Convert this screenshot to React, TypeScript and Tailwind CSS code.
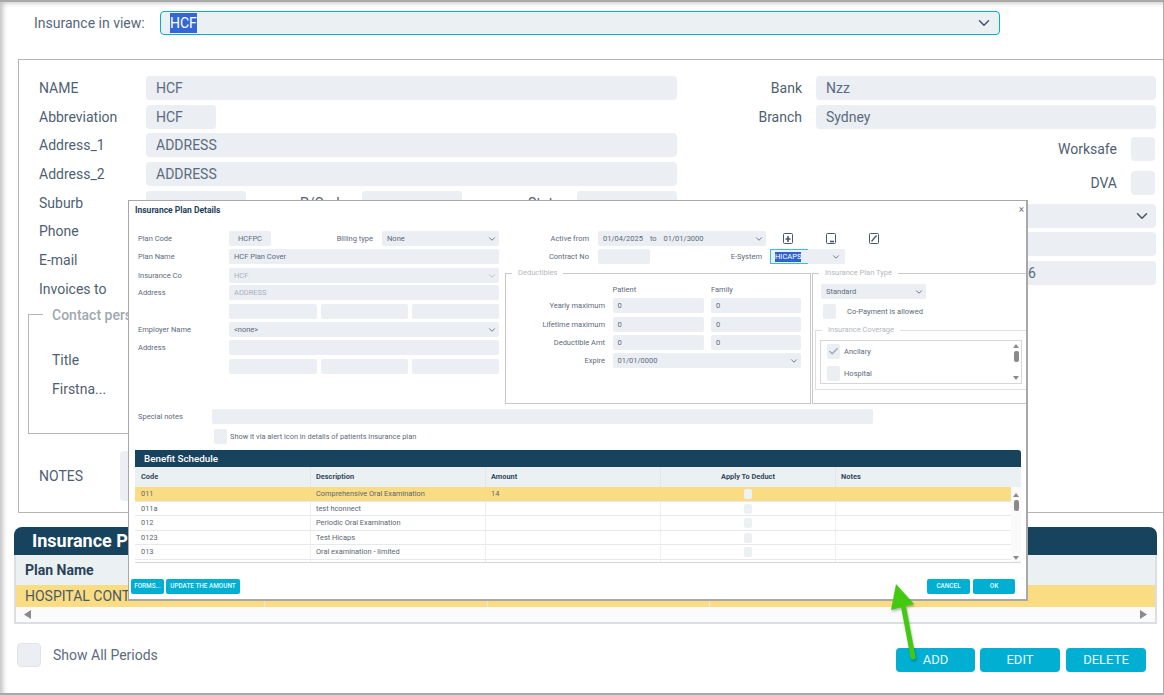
import { ChevronDown, Check } from 'lucide-react';

const font = { fontFamily: 'Roboto, "Liberation Sans", sans-serif' };

function Field({ value = '', className = '' }: { value?: string; className?: string }) {
    return (
        <div className={`h-[24px] rounded-[4px] bg-[#ebeef3] px-[10px] text-[14px] leading-[24px] text-[#5c6b80] ${className}`}>
            {value}
        </div>
    );
}

function Label({ children, className = '' }: { children: string; className?: string }) {
    return <div className={`text-[14px] leading-[24px] text-[#4f5f72] ${className}`}>{children}</div>;
}

function Mini({ value = '', className = '', muted = false }: { value?: string; className?: string; muted?: boolean }) {
    return (
        <div className={`h-[15px] shrink-0 rounded-[2px] bg-[#ebeef3] px-[5px] text-[7.5px] leading-[15px] ${muted ? 'text-[#a9b0ba]' : 'text-[#5c6b7c]'} ${className}`}>
            {value}
        </div>
    );
}

function MiniSelect({ value, className = '', muted = false }: { value: string; className?: string; muted?: boolean }) {
    return (
        <div className={`flex h-[15px] shrink-0 items-center justify-between rounded-[2px] bg-[#ebeef3] pl-[5px] pr-[2px] text-[7.5px] ${muted ? 'text-[#a9b0ba]' : 'text-[#5c6b7c]'} ${className}`}>
            <span>{value}</span>
            <ChevronDown size={10} className={muted ? 'text-[#b5bac2]' : 'text-[#55657a]'} />
        </div>
    );
}

function MiniLabel({ children, className = '' }: { children: string; className?: string }) {
    return <div className={`h-[15px] shrink-0 whitespace-nowrap text-[7.5px] leading-[15px] text-[#5c6b7c] ${className}`}>{children}</div>;
}

function MiniBox({ className = '', checked = false }: { className?: string; checked?: boolean }) {
    return (
        <div className={`flex h-[15px] w-[13px] shrink-0 items-center justify-center rounded-[2px] bg-[#ebeef3] ${className}`}>
            {checked && <Check size={11} strokeWidth={3.5} className="text-[#a3adbb]" />}
        </div>
    );
}

function Scrollbar({ className = '' }: { className?: string }) {
    return (
        <div className={`flex w-[10px] shrink-0 flex-col items-center justify-between py-[3px] ${className}`}>
            <div className="flex flex-col items-center gap-[3px]">
                <svg width="6" height="4" viewBox="0 0 6 4"><polygon points="3,0 6,4 0,4" fill="#8a8a8a" /></svg>
                <div className="h-[11px] w-[5px] rounded-[2px] bg-[#8a8a8a]" />
            </div>
            <svg width="6" height="4" viewBox="0 0 6 4"><polygon points="0,0 6,0 3,4" fill="#8a8a8a" /></svg>
        </div>
    );
}

function ToolIcon({ kind }: { kind: 'plus' | 'minus' | 'edit' }) {
    return (
        <svg width="10" height="11" viewBox="0 0 10 11" fill="none" stroke="#46586c">
            <rect x="0.5" y="0.5" width="9" height="10" rx="1" />
            {kind === 'plus' && <path d="M5 3v6M2.5 6h5" strokeWidth="1.6" />}
            {kind === 'minus' && <path d="M4 8.5h4" strokeWidth="1.6" />}
            {kind === 'edit' && <path d="M2.5 8.5 7.5 2.5" strokeWidth="1.3" />}
        </svg>
    );
}

const benefitRows = [
    { code: '011', desc: 'Comprehensive Oral Examination', amount: '14' },
    { code: '011a', desc: 'test hconnect', amount: '' },
    { code: '012', desc: 'Periodic Oral Examination', amount: '' },
    { code: '0123', desc: 'Test Hicaps', amount: '' },
    { code: '013', desc: 'Oral examination - limited', amount: '' },
    { code: '', desc: '', amount: '' },
];

function PlanDialog() {
    return (
        <div className="absolute left-[128px] top-[198px] z-10 h-[401px] w-[900px] border border-r-2 border-b-2 border-[#a8a8a8] bg-white">
            <div className="flex h-[30px] justify-between pl-[6px] pr-[2px] pt-[3px]">
                <span className="text-[8.5px] font-bold leading-[13px] text-[#1d3f58]">Insurance Plan Details</span>
                <span className="text-[10px] leading-[12px] text-[#777]">×</span>
            </div>

            <div className="flex">
                <div className="ml-[9px] flex w-[361px] shrink-0 flex-col">
                    <div className="flex">
                        <MiniLabel className="w-[91px]">Plan Code</MiniLabel>
                        <Mini value="HCFPC" className="w-[42px] text-center" />
                        <MiniLabel className="w-[102px] text-right">Billing type</MiniLabel>
                        <MiniSelect value="None" className="ml-[9px] w-[117px]" />
                    </div>
                    <div className="mt-[3px] flex">
                        <MiniLabel className="w-[91px]">Plan Name</MiniLabel>
                        <Mini value="HCF Plan Cover" className="w-[270px]" />
                    </div>
                    <div className="mt-[4px] flex">
                        <MiniLabel className="w-[91px]">Insurance Co</MiniLabel>
                        <MiniSelect value="HCF" muted className="w-[270px]" />
                    </div>
                    <div className="mt-[2px] flex">
                        <MiniLabel className="w-[91px]">Address</MiniLabel>
                        <Mini value="ADDRESS" muted className="w-[270px]" />
                    </div>
                    <div className="mt-[4px] flex gap-[4px] pl-[91px]">
                        <Mini className="w-[88px]" />
                        <Mini className="w-[87px]" />
                        <Mini className="w-[87px]" />
                    </div>
                    <div className="mt-[3px] flex">
                        <MiniLabel className="w-[91px]">Employer Name</MiniLabel>
                        <MiniSelect value="<none>" className="w-[270px]" />
                    </div>
                    <div className="mt-[3px] flex">
                        <MiniLabel className="w-[91px]">Address</MiniLabel>
                        <Mini className="w-[270px]" />
                    </div>
                    <div className="mt-[4px] flex gap-[4px] pl-[91px]">
                        <Mini className="w-[88px]" />
                        <Mini className="w-[87px]" />
                        <Mini className="w-[87px]" />
                    </div>
                </div>

                <div className="ml-[6px] flex min-w-0 flex-1 flex-col">
                    <div className="flex items-center">
                        <MiniLabel className="w-[84px] text-right">Active from</MiniLabel>
                        <div className="ml-[9px] flex h-[15px] w-[168px] items-center justify-between rounded-[2px] bg-[#ebeef3] pl-[5px] pr-[2px] text-[7.5px] text-[#5c6b7c]">
                            <span className="flex gap-[7px]"><span>01/04/2025</span><span>to</span><span>01/01/3000</span></span>
                            <ChevronDown size={10} className="text-[#55657a]" />
                        </div>
                        <div className="ml-[17px] flex gap-[33px]">
                            <ToolIcon kind="plus" />
                            <ToolIcon kind="minus" />
                            <ToolIcon kind="edit" />
                        </div>
                    </div>
                    <div className="mt-[3px] flex">
                        <MiniLabel className="w-[84px] text-right">Contract No</MiniLabel>
                        <Mini className="ml-[9px] w-[52px]" />
                        <MiniLabel className="w-[112px] text-right">E-System</MiniLabel>
                        <div className="ml-[8px] flex h-[15px] w-[75px] items-center justify-between rounded-[2px] bg-[#ebeef3] pr-[2px] text-[7.5px] shadow-[inset_1px_0_0_#35c0dc]">
                            <span className="flex h-[15px] w-[38px] items-center border-y border-[#35c0dc] pl-[5px]">
                                <span className="bg-[#2f62cf] leading-[10px] text-white">HICAPS</span>
                            </span>
                            <ChevronDown size={10} className="mr-[2px] text-[#55657a]" />
                        </div>
                    </div>

                    <div className="mt-[3px] flex">
                        <fieldset className="h-[137px] w-[306px] shrink-0 border border-[#c9c9c9]">
                            <legend className="ml-[6px] px-[6px] text-[7.5px] leading-[12px] text-[#b3b7bd]">Deductibles</legend>
                            <div className="mt-[5px] grid grid-cols-[99px_91px_90px] gap-x-[7.5px] gap-y-[3.3px]">
                                <div className="h-[11px]" />
                                <div className="h-[11px] text-[7.5px] leading-[11px] text-[#5c6b7c]">Patient</div>
                                <div className="h-[11px] text-[7.5px] leading-[11px] text-[#5c6b7c]">Family</div>
                                <MiniLabel className="text-right">Yearly maximum</MiniLabel>
                                <Mini value="0" />
                                <Mini value="0" />
                                <MiniLabel className="text-right">Lifetime maximum</MiniLabel>
                                <Mini value="0" />
                                <Mini value="0" />
                                <MiniLabel className="text-right">Deductible Amt</MiniLabel>
                                <Mini value="0" />
                                <Mini value="0" />
                                <MiniLabel className="text-right">Expire</MiniLabel>
                                <MiniSelect value="01/01/0000" className="col-span-2" />
                            </div>
                        </fieldset>
                        <fieldset className="ml-[1px] h-[137px] flex-1 border border-r-0 border-[#c9c9c9] pl-[8px]">
                            <legend className="-ml-[2px] px-[6px] text-[7.5px] leading-[12px] text-[#b3b7bd]">Insurance Plan Type</legend>
                            <MiniSelect value="Standard" className="mt-[5px] w-[105px]" />
                            <div className="mt-[5px] flex">
                                <MiniBox className="ml-[2px]" />
                                <span className="ml-[11px] text-[7.5px] leading-[15px] text-[#5c6b7c]">Co-Payment is allowed</span>
                            </div>
                            <fieldset className="-ml-[6px] mt-[5px] h-[66px] border border-r-0 border-[#dedede] pl-[4px]">
                                <legend className="ml-[2px] px-[6px] text-[7.5px] leading-[12px] text-[#b3b7bd]">Insurance Coverage</legend>
                                <div className="mt-[4px] flex h-[44px] w-[202px] justify-between border border-[#d8d8d8]">
                                    <div className="flex flex-col gap-[7px] pl-[6px] pt-[3px]">
                                        <div className="flex items-center gap-[4px] text-[7.5px] text-[#5c6b7c]"><MiniBox checked />Ancilary</div>
                                        <div className="flex items-center gap-[4px] text-[7.5px] text-[#5c6b7c]"><MiniBox />Hospital</div>
                                    </div>
                                    <Scrollbar />
                                </div>
                            </fieldset>
                        </fieldset>
                    </div>
                </div>
            </div>

            <div className="mt-[5px] flex pl-[9px]">
                <MiniLabel className="w-[74px]">Special notes</MiniLabel>
                <Mini className="w-[661px]" />
            </div>
            <div className="mt-[5px] flex pl-[85px]">
                <MiniBox />
                <span className="ml-[3px] text-[7.4px] leading-[15px] text-[#5c6b7c]">Show it via alert icon in details of patients insurance plan</span>
            </div>

            <div className="ml-[6px] mt-[6px] h-[113px] w-[886px] overflow-hidden border-b border-[#d5d8dc]">
                <div className="h-[17px] rounded-tr-[3px] bg-[#17435f] pl-[9px] text-[9.8px] font-medium leading-[17px] text-white">Benefit Schedule</div>
                <div className="grid h-[20px] grid-cols-[176px_175px_175px_175px_185px] bg-[#ebf0f3] text-[7.4px] font-bold leading-[19px] text-[#33495c]">
                    <div className="border-r border-[#e3e7ea] pl-[6px]">Code</div>
                    <div className="border-r border-[#e3e7ea] pl-[5px]">Description</div>
                    <div className="border-r border-[#e3e7ea] pl-[5px]">Amount</div>
                    <div className="border-r border-[#e3e7ea] text-center">Apply To Deduct</div>
                    <div className="pl-[5px]">Notes</div>
                </div>
                <div className="flex">
                    <div className="min-w-0 flex-1">
                        {benefitRows.map((row, i) => (
                            <div
                                key={i}
                                className={`grid h-[14.6px] grid-cols-[176px_175px_175px_175px_175px] border-b border-[#e6e8eb] text-[7.4px] leading-[14px] text-[#5a6670] ${i === 0 ? 'bg-[#fadd83]' : 'bg-white'}`}
                            >
                                <div className={`border-r pl-[6px] ${i === 0 ? 'border-transparent' : 'border-[#eeeeee]'}`}>{row.code}</div>
                                <div className={`border-r pl-[5px] ${i === 0 ? 'border-transparent' : 'border-[#eeeeee]'}`}>{row.desc}</div>
                                <div className={`border-r pl-[5px] ${i === 0 ? 'border-transparent' : 'border-[#eeeeee]'}`}>{row.amount}</div>
                                <div className={`flex justify-center border-r pt-[2px] ${i === 0 ? 'border-transparent' : 'border-[#eeeeee]'}`}>
                                    <div className={`h-[10px] w-[8px] rounded-[2px] ${i === 0 ? 'bg-[#f0f3f5]' : 'bg-[#ebf0f3]'}`} />
                                </div>
                                <div />
                            </div>
                        ))}
                    </div>
                    <Scrollbar className="h-[76px] bg-[#fafafa] pt-[6px]" />
                </div>
            </div>

            <div className="mt-[16px] flex justify-between whitespace-nowrap pl-[2px] pr-[11px] text-[6.4px] font-medium">
                <div className="flex gap-[2px]">
                    <button className="h-[15px] w-[33px] rounded-[2px] bg-[#00afd2] text-[#e5fbff]">FORMS...</button>
                    <button className="h-[15px] w-[74px] rounded-[2px] bg-[#00afd2] text-[#e5fbff]">UPDATE THE AMOUNT</button>
                </div>
                <div className="flex gap-[3px]">
                    <button className="h-[15px] w-[43px] rounded-[2px] bg-[#00afd2] text-[#e5fbff]">CANCEL</button>
                    <button className="h-[15px] w-[42px] rounded-[2px] bg-[#00afd2] text-[#e5fbff]">OK</button>
                </div>
            </div>
        </div>
    );
}

export default function App() {
    return (
        <div
            style={font}
            className="relative h-[695px] w-[1164px] overflow-hidden border-t-2 border-b-2 border-r border-[#a9a9a9] bg-white shadow-[inset_5px_3px_5px_-2px_#c4c4c4]"
        >
            <div className="flex h-[57px] items-start pl-[34px] pt-[9px]">
                <span className="w-[126px] text-[14px] leading-[24px] text-[#56677a]">Insurance in view:</span>
                <div className="flex h-[24px] w-[840px] items-center justify-between rounded-[4px] border border-[#00afd2] bg-[#ebf0f3] pl-[9px] pr-[6px]">
                    <span className="bg-[#3367d6] text-[14px] leading-[20px] text-white">HCF</span>
                    <ChevronDown size={18} className="text-[#445567]" />
                </div>
            </div>

            <div className="ml-[18px] h-[454px] border border-r-0 border-[#b5b5b5] pt-[16px]">
                <div className="flex">
                    <div className="ml-[20px] w-[638px] shrink-0">
                        <div className="grid grid-cols-[107px_1fr] gap-y-[4.7px]">
                            <Label>NAME</Label>
                            <Field value="HCF" />
                            <Label>Abbreviation</Label>
                            <Field value="HCF" className="w-[70px]" />
                            <Label>Address_1</Label>
                            <Field value="ADDRESS" />
                            <Label>Address_2</Label>
                            <Field value="ADDRESS" />
                            <Label>Suburb</Label>
                            <div className="flex">
                                <Field className="w-[100px]" />
                                <Label className="ml-[54px]">P/Code</Label>
                                <Field className="ml-[15px] w-[100px]" />
                                <Label className="ml-[66px]">State</Label>
                                <Field className="ml-[16px] w-[100px]" />
                            </div>
                            <Label>Phone</Label>
                            <Field />
                            <Label>E-mail</Label>
                            <Field />
                            <Label>Invoices to</Label>
                            <Field />
                        </div>
                        <fieldset className="-ml-[11px] mt-[4px] h-[129px] w-[500px] border border-[#b5b5b5] pl-[23px]">
                            <legend className="-ml-[9px] px-[9px] text-[14px] font-medium leading-[20px] text-[#a2a8b0]">Contact person</legend>
                            <Label className="mt-[23px]">Title</Label>
                            <Label className="mt-[5px]">Firstna...</Label>
                        </fieldset>
                        <div className="mt-[17px] flex items-center">
                            <Label className="w-[81px]">NOTES</Label>
                            <div className="h-[50px] w-[400px] rounded-[4px] bg-[#ebeef3]" />
                        </div>
                    </div>

                    <div className="flex w-[479px] shrink-0 flex-col gap-[4.7px]">
                        <div className="flex justify-end gap-[14px]">
                            <Label>Bank</Label>
                            <Field value="Nzz" className="w-[340px]" />
                        </div>
                        <div className="flex justify-end gap-[14px]">
                            <Label>Branch</Label>
                            <Field value="Sydney" className="w-[340px]" />
                        </div>
                        <div className="mt-[4px] flex justify-end gap-[14px] pr-px">
                            <Label>Worksafe</Label>
                            <div className="h-[24px] w-[24px] rounded-[4px] bg-[#ebeef3]" />
                        </div>
                        <div className="mt-[5px] flex justify-end gap-[14px] pr-px">
                            <Label>DVA</Label>
                            <div className="h-[24px] w-[24px] rounded-[4px] bg-[#ebeef3]" />
                        </div>
                        <div className="mt-[4px] flex h-[24px] items-center justify-end rounded-[4px] bg-[#ebeef3] pr-[5px]">
                            <ChevronDown size={18} className="text-[#445567]" />
                        </div>
                        <Field />
                        <Field value="6" className="pl-[351px]" />
                    </div>
                </div>
            </div>

            <div className="ml-[14px] mt-[14px] w-[1143px]">
                <div className="h-[28px] rounded-t-[8px] bg-[#17435f] pl-[18px] text-[18px] font-bold leading-[28px] text-white">Insurance P</div>
                <div className="border-x-2 border-b-2 border-[#dcdfe2]">
                    <div className="h-[30px] bg-[#ebf0f3] pl-[9px] text-[14px] font-bold leading-[31px] text-[#2a4258]">Plan Name</div>
                    <div className="grid h-[22px] grid-cols-[249px_223px_222px_1fr] bg-[#fadd83] text-[14px] leading-[22px] text-[#4c5a66]">
                        <div className="border-r border-[#e5e8ea] pl-[9px]">HOSPITAL CONT</div>
                        <div className="border-r border-[#e5e8ea]" />
                        <div className="border-r border-[#e5e8ea]" />
                        <div />
                    </div>
                    <div className="flex h-[15px] items-center justify-between bg-[#fbfbfb] px-[8px]">
                        <svg width="7" height="9" viewBox="0 0 7 9"><polygon points="7,0 7,9 0,4.5" fill="#8a8a8a" /></svg>
                        <svg width="7" height="9" viewBox="0 0 7 9"><polygon points="0,0 7,4.5 0,9" fill="#8a8a8a" /></svg>
                    </div>
                </div>
            </div>

            <div className="mt-[19px] flex items-start pl-[17px] pr-[17px]">
                <div className="h-[24px] w-[24px] rounded-[4px] border border-[#e0e3e8] bg-[#ebeef3]" />
                <span className="ml-[12px] text-[14px] leading-[24px] text-[#5c6b80]">Show All Periods</span>
                <div className="ml-auto mt-[5px] flex text-[13px] text-[#e8fbff]">
                    <button className="h-[24px] w-[79px] rounded-[4px] bg-[#00afd2]">ADD</button>
                    <button className="ml-[5px] h-[24px] w-[80px] rounded-[4px] bg-[#00afd2]">EDIT</button>
                    <button className="ml-[6px] h-[24px] w-[80px] rounded-[4px] bg-[#00afd2]">DELETE</button>
                </div>
            </div>

            <PlanDialog />

            <svg className="absolute left-[880px] top-[578px] z-20 drop-shadow-[1px_2px_1px_rgba(0,0,0,0.25)]" width="50" height="90" viewBox="0 0 50 90">
                <polygon points="16,4 11,30 34,24" fill="#44c911" />
                <line x1="23" y1="24" x2="33" y2="77" stroke="#44c911" strokeWidth="5" strokeLinecap="round" />
            </svg>
        </div>
    );
}
